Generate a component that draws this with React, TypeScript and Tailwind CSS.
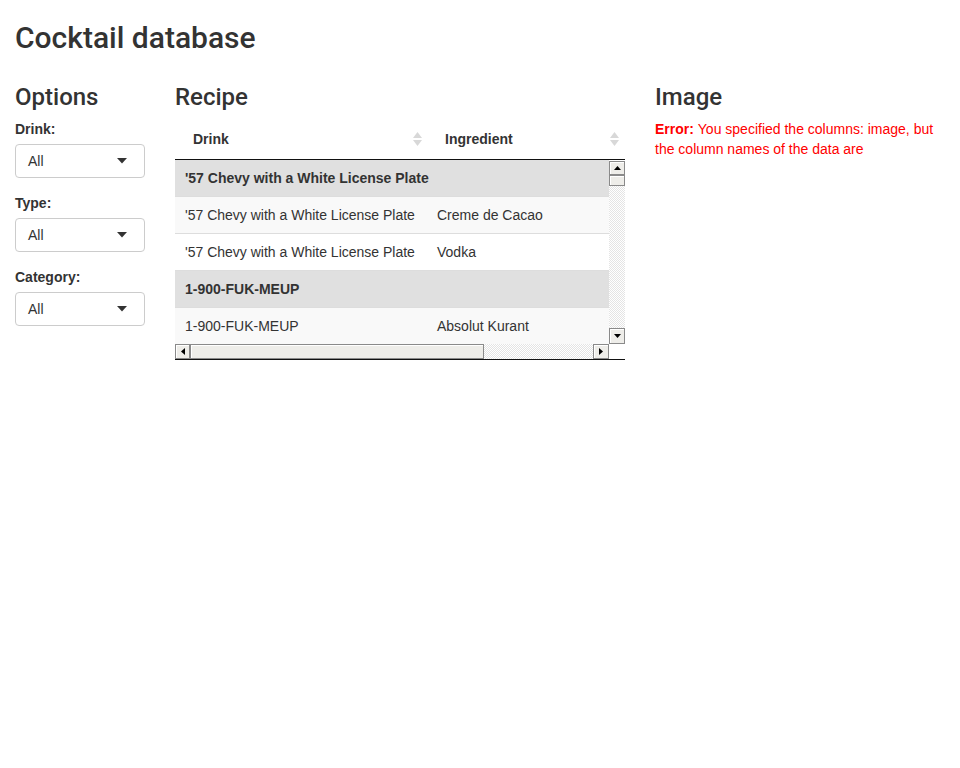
import React from "react";

const rows = [
  { group: true, drink: "'57 Chevy with a White License Plate", ingredient: "" },
  { drink: "'57 Chevy with a White License Plate", ingredient: "Creme de Cacao", bg: "bg-[#f9f9f9]" },
  { drink: "'57 Chevy with a White License Plate", ingredient: "Vodka", bg: "bg-white" },
  { group: true, drink: "1-900-FUK-MEUP", ingredient: "" },
  { drink: "1-900-FUK-MEUP", ingredient: "Absolut Kurant", bg: "bg-[#f9f9f9]" },
];

function Caret() {
  return (
    <svg width="10" height="6" viewBox="0 0 10 6" className="text-[#333]">
      <path d="M0 0h10L5 5.5z" fill="currentColor" />
    </svg>
  );
}

function SelectBox({ label }: { label: string }) {
  return (
    <div className="mb-[15px]">
      <label className="mb-[5px] block font-bold">{label}</label>
      <div className="flex h-[34px] w-[130px] items-center justify-between rounded border border-[#ccc] bg-white pl-3 pr-[17px]">
        <span>All</span>
        <Caret />
      </div>
    </div>
  );
}

function SortIcon() {
  return (
    <svg width="9" height="14" viewBox="0 0 9 14" className="text-[#d8d8d8]">
      <path d="M4.5 0L9 6H0z" fill="currentColor" />
      <path d="M0 8h9l-4.5 6z" fill="currentColor" />
    </svg>
  );
}

// little black arrow used by the old-style scroll buttons
function Arrow({ dir }: { dir: "up" | "down" | "left" | "right" }) {
  const d = {
    up: "M0 4L3.5 0L7 4z",
    down: "M0 0h7L3.5 4z",
    left: "M4 0v7L0 3.5z",
    right: "M0 0l4 3.5L0 7z",
  }[dir];
  const vert = dir === "up" || dir === "down";
  return (
    <svg width={vert ? 7 : 4} height={vert ? 4 : 7} viewBox={vert ? "0 0 7 4" : "0 0 4 7"}>
      <path d={d} fill="#000" />
    </svg>
  );
}

const btn =
  "flex items-center justify-center border border-[#8a8a8a] bg-[#eeede9] shadow-[inset_1px_1px_0_#fff]";
const track =
  "bg-[repeating-conic-gradient(#e4e4e4_0_25%,#ffffff_0_50%)] bg-[length:2px_2px]";
const heading = "font-['Roboto','Liberation_Sans',sans-serif] font-medium leading-[1.1] mt-[21px] mb-[9px]";

function RecipeTable() {
  return (
    <div className="w-[450px] border-b border-[#111]">
      {/* header */}
      <div className="flex h-[41px] border-b border-[#111] font-bold">
        <div className="flex w-[252px] items-center justify-between pl-[18px] pr-[5px]">
          <span>Drink</span>
          <SortIcon />
        </div>
        <div className="flex flex-1 items-center justify-between pl-[18px] pr-[6px]">
          <span>Ingredient</span>
          <SortIcon />
        </div>
      </div>

      {/* body + vertical scrollbar */}
      <div className="flex h-[184px]">
        <div className="flex-1 overflow-hidden">
          {rows.map((r, i) => (
            <div
              key={i}
              className={
                "flex items-center " +
                (i > 0 ? "h-[37px] border-t border-[#ddd] " : "h-[36px] ") +
                (r.group ? "bg-[#e0e0e0] font-bold" : r.bg)
              }
            >
              {r.group ? (
                <div className="whitespace-nowrap pl-[10px]">{r.drink}</div>
              ) : (
                <>
                  <div className="w-[252px] whitespace-nowrap pl-[10px]">{r.drink}</div>
                  <div className="whitespace-nowrap pl-[10px]">{r.ingredient}</div>
                </>
              )}
            </div>
          ))}
        </div>
        <div className="flex w-4 flex-col bg-white">
          <div className={btn + " mt-px h-[14px]"}>
            <Arrow dir="up" />
          </div>
          <div className="h-[11px] border border-[#8a8a8a] bg-[#eeede9] shadow-[inset_1px_1px_0_#fff]" />
          <div className={track + " flex-1"} />
          <div className={btn + " h-[16px]"}>
            <Arrow dir="down" />
          </div>
        </div>
      </div>

      {/* horizontal scrollbar */}
      <div className="flex h-[15px]">
        <div className="flex flex-1">
          <div className={btn + " w-[15px]"}>
            <Arrow dir="left" />
          </div>
          <div className="w-[294px] border border-[#8a8a8a] bg-[#eeede9] shadow-[inset_1px_1px_0_#fff]" />
          <div className={track + " flex-1"} />
          <div className={btn + " w-4"}>
            <Arrow dir="right" />
          </div>
        </div>
        <div className="w-4 bg-white" />
      </div>
    </div>
  );
}

export default function App() {
  return (
    <div className="min-h-screen bg-white px-[15px] font-['Liberation_Sans',Arial,sans-serif] text-sm leading-5 text-[#333]">
      <h2 className={heading + " text-[30px]"}>Cocktail database</h2>

      <div className="grid grid-cols-[130px_450px_290px] gap-x-[30px]">
        {/* Options */}
        <div>
          <h3 className={heading + " text-2xl"}>Options</h3>
          <SelectBox label="Drink:" />
          <SelectBox label="Type:" />
          <SelectBox label="Category:" />
        </div>

        {/* Recipe */}
        <div>
          <h3 className={heading + " text-2xl"}>Recipe</h3>
          <RecipeTable />
        </div>

        {/* Image */}
        <div>
          <h3 className={heading + " text-2xl"}>Image</h3>
          <p className="text-[#ff0000]">
            <b>Error: </b>You specified the columns: image, but the column names of the data are
          </p>
        </div>
      </div>
    </div>
  );
}
